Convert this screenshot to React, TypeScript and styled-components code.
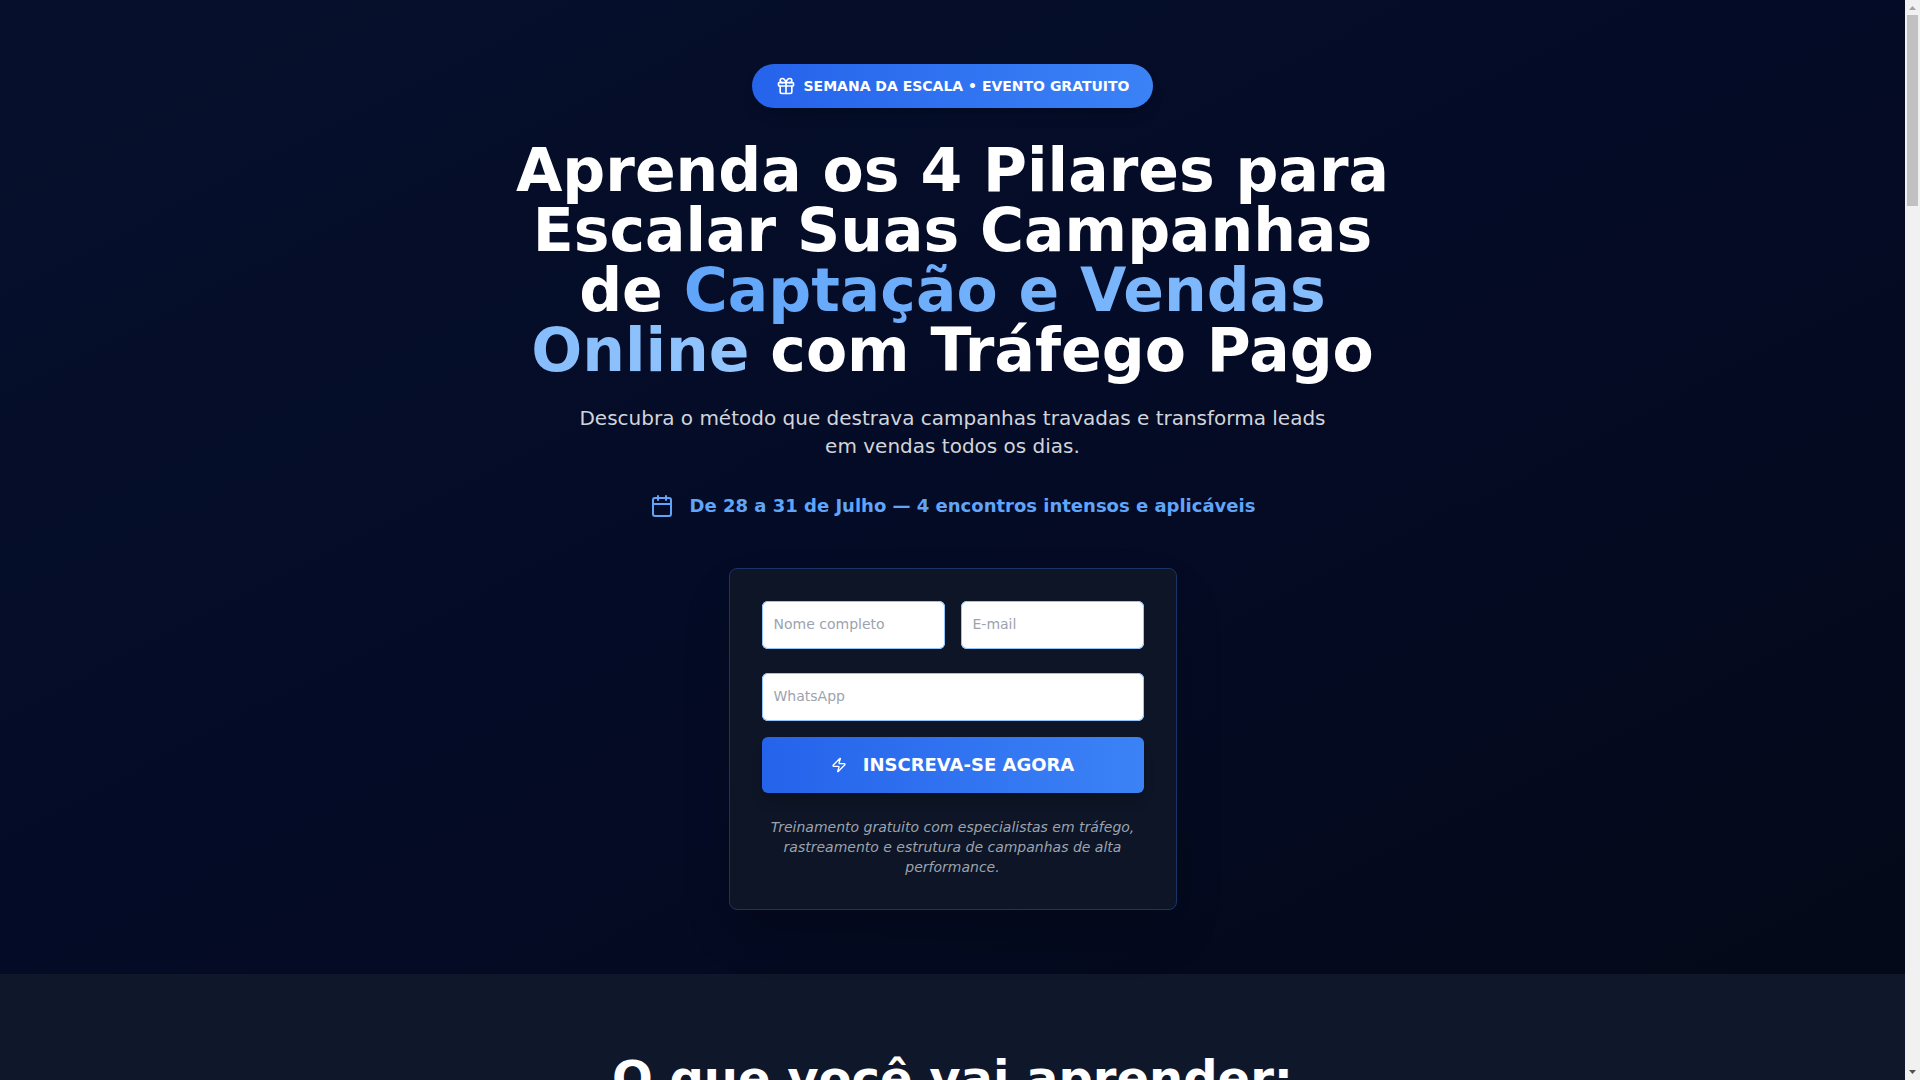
import React from "react";
import styled, { createGlobalStyle } from "styled-components";
import { Calendar, Zap } from "lucide-react";

const GlobalStyle = createGlobalStyle`
  *, *::before, *::after { box-sizing: border-box; }
  body {
    margin: 0;
    font-family: "DejaVu Sans", sans-serif;
    background: #0f172a;
    color: #ffffff;
  }
  h1, h2, p { margin: 0; }
`;

const Window = styled.div`
  display: flex;
  height: 100vh;
  overflow: hidden;
`;

const Page = styled.main`
  flex: 1;
  min-width: 0;
  overflow: hidden;
`;

const Hero = styled.section`
  display: flex;
  flex-direction: column;
  align-items: center;
  padding: 64px 16px;
  text-align: center;
  background: linear-gradient(to bottom right, #06102c, #040b26 50%, #040919);
`;

const Badge = styled.div`
  display: flex;
  align-items: center;
  gap: 8px;
  margin-bottom: 32px;
  padding: 12px 24px;
  border-radius: 9999px;
  background: linear-gradient(to right, #2563eb, #3b82f6);
  box-shadow: 0 10px 15px -3px rgba(0, 0, 0, 0.1), 0 4px 6px -4px rgba(0, 0, 0, 0.1);
  font-size: 14px;
  line-height: 20px;
  font-weight: 700;
`;

const Title = styled.h1`
  max-width: 896px;
  margin-bottom: 24px;
  font-size: 60px;
  line-height: 60px;
  font-weight: 700;
`;

const Highlight = styled.span`
  background: linear-gradient(to right, #60a5fa, #93c5fd);
  background-clip: text;
  -webkit-background-clip: text;
  color: transparent;
`;

const Lead = styled.p`
  max-width: 768px;
  margin-bottom: 32px;
  color: #d1d5db;
  font-size: 20px;
  line-height: 28px;
`;

const Dates = styled.div`
  display: flex;
  align-items: center;
  gap: 16px;
  margin-bottom: 48px;
  color: #60a5fa;
  font-size: 18px;
  line-height: 28px;
  font-weight: 600;
`;

const FormCard = styled.form`
  width: 100%;
  max-width: 448px;
  padding: 32px;
  border: 1px solid #1b3466;
  border-radius: 8px;
  background: #0d1526;
  box-shadow: 0 25px 50px -12px rgba(0, 0, 0, 0.25);
`;

const FieldRow = styled.div`
  display: grid;
  grid-template-columns: 1fr 1fr;
  gap: 16px;
  margin-bottom: 24px;
`;

const Field = styled.input`
  width: 100%;
  min-width: 0;
  height: 48px;
  padding: 0 12px 2px;
  border: 0;
  border-radius: 6px;
  background: #ffffff;
  box-shadow: inset 0 0 0 1px #93c5fd;
  color: #111827;
  font-family: inherit;
  font-size: 14px;
  line-height: 20px;

  &::placeholder { color: #9ca3af; opacity: 1; }
`;

const SubmitButton = styled.button`
  display: flex;
  align-items: center;
  justify-content: center;
  gap: 16px;
  width: 100%;
  height: 56px;
  margin-top: 16px;
  border: 0;
  border-radius: 6px;
  background: linear-gradient(to right, #2563eb, #3b82f6);
  box-shadow: 0 10px 15px -3px rgba(0, 0, 0, 0.1), 0 4px 6px -4px rgba(0, 0, 0, 0.1);
  color: #ffffff;
  font-family: inherit;
  font-size: 18px;
  line-height: 28px;
  font-weight: 700;
  cursor: pointer;
`;

const Note = styled.p`
  margin-top: 24px;
  color: #9ca3af;
  font-size: 14px;
  line-height: 20px;
  font-style: italic;
`;

const Topics = styled.section`
  padding: 80px 16px;
  background: #0f172a;
  text-align: center;
`;

const TopicsTitle = styled.h2`
  font-size: 48px;
  line-height: 48px;
  font-weight: 700;
`;

const ScrollRail = styled.div`
  display: flex;
  flex-direction: column;
  align-items: center;
  flex: 0 0 15px;
  background: #f1f1f1;
`;

const ScrollThumb = styled.div`
  width: 11px;
  height: 191px;
  background: #c1c1c1;
`;

const ScrollArrow = styled.svg`
  display: block;
  width: 15px;
  height: 15px;
`;

const Spacer = styled.div`
  flex: 1;
`;

function GiftIcon() {
  return (
    <svg width="20" height="20" viewBox="0 0 24 24" fill="none" stroke="currentColor" strokeWidth="2" strokeLinecap="round" strokeLinejoin="round" aria-hidden="true">
      <rect x="3" y="8" width="18" height="4" rx="1" />
      <path d="M12 8v13" />
      <path d="M19 12v7a2 2 0 0 1-2 2H7a2 2 0 0 1-2-2v-7" />
      <path d="M7.5 8a2.5 2.5 0 0 1 0-5A4.8 8 0 0 1 12 8a4.8 8 0 0 1 4.5-5 2.5 2.5 0 0 1 0 5" />
    </svg>
  );
}

export default function App() {
  return (
    <>
      <GlobalStyle />
      <Window>
        <Page>
          <Hero>
            <Badge>
              <GiftIcon />
              <span>SEMANA DA ESCALA • EVENTO GRATUITO</span>
            </Badge>
            <Title>
              Aprenda os 4 Pilares para Escalar Suas Campanhas de{" "}
              <Highlight>Captação e Vendas Online</Highlight> com Tráfego Pago
            </Title>
            <Lead>
              Descubra o método que destrava campanhas travadas e transforma leads em vendas todos os dias.
            </Lead>
            <Dates>
              <Calendar size={24} aria-hidden="true" />
              <span>De 28 a 31 de Julho — 4 encontros intensos e aplicáveis</span>
            </Dates>
            <FormCard onSubmit={(event) => event.preventDefault()}>
              <FieldRow>
                <Field type="text" name="name" placeholder="Nome completo" aria-label="Nome completo" />
                <Field type="email" name="email" placeholder="E-mail" aria-label="E-mail" />
              </FieldRow>
              <Field type="tel" name="whatsapp" placeholder="WhatsApp" aria-label="WhatsApp" />
              <SubmitButton type="submit">
                <Zap size={16} aria-hidden="true" />
                INSCREVA-SE AGORA
              </SubmitButton>
              <Note>
                Treinamento gratuito com especialistas em tráfego, rastreamento e estrutura de campanhas de alta performance.
              </Note>
            </FormCard>
          </Hero>
          <Topics>
            <TopicsTitle>O que você vai aprender:</TopicsTitle>
          </Topics>
        </Page>
        <ScrollRail aria-hidden="true">
          <ScrollArrow viewBox="0 0 15 15">
            <path d="M4 10h7L7.5 6z" fill="#a3a3a3" />
          </ScrollArrow>
          <ScrollThumb />
          <Spacer />
          <ScrollArrow viewBox="0 0 15 15">
            <path d="M4 5h7L7.5 9z" fill="#505050" />
          </ScrollArrow>
        </ScrollRail>
      </Window>
    </>
  );
}
